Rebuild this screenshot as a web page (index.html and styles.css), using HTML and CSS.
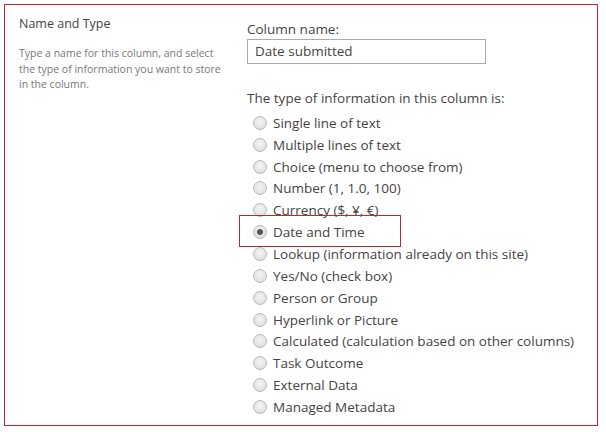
FILE: index.html
```html
<!DOCTYPE html>
<html>
<head>
<meta charset="utf-8">
<link rel="stylesheet" href="styles.css">
</head>
<body>
<div class="frame">
  <div class="left">
    <div class="sec-title">Name and Type</div>
    <div class="sec-desc">Type a name for this column, and select the type of information you want to store in the column.</div>
  </div>
  <div class="right">
    <div class="label">Column name:</div>
    <div class="input">Date submitted</div>
    <div class="label type-label">The type of information in this column is:</div>
    <ul class="radios">
      <li class="opt"><span class="radio"></span>Single line of text</li>
      <li class="opt"><span class="radio"></span>Multiple lines of text</li>
      <li class="opt"><span class="radio"></span>Choice (menu to choose from)</li>
      <li class="opt"><span class="radio"></span>Number (1, 1.0, 100)</li>
      <li class="opt"><span class="radio"></span>Currency ($, ¥, €)</li>
      <li class="opt selected"><span class="radio checked"></span>Date and Time<span class="highlight"></span></li>
      <li class="opt"><span class="radio"></span>Lookup (information already on this site)</li>
      <li class="opt"><span class="radio"></span>Yes/No (check box)</li>
      <li class="opt"><span class="radio"></span>Person or Group</li>
      <li class="opt"><span class="radio"></span>Hyperlink or Picture</li>
      <li class="opt"><span class="radio"></span>Calculated (calculation based on other columns)</li>
      <li class="opt"><span class="radio"></span>Task Outcome</li>
      <li class="opt"><span class="radio"></span>External Data</li>
      <li class="opt"><span class="radio"></span>Managed Metadata</li>
    </ul>
  </div>
</div>
</body>
</html>
```
FILE: styles.css
```css
html, body {
  margin: 0;
  padding: 0;
  background: #fff;
}
body {
  font-family: "Open Sans", "Noto Sans", sans-serif;
  color: #444;
}
.frame {
  margin: 4px 0 0 4px;
  width: 592px;
  height: 420px;
  border: 1px solid #c3262e;
  display: flex;
  box-sizing: content-box;
}
.left {
  width: 228px;
  padding: 10px 0 0 14px;
  flex: none;
}
.sec-title {
  font-size: 12.5px;
  color: #444;
  line-height: 18px;
}
.sec-desc {
  margin-top: 13px;
  width: 212px;
  font-size: 10.5px;
  line-height: 15.5px;
  color: #777;
}
.right {
  padding: 15px 0 0 0;
  flex: 1;
}
.label {
  font-size: 13.5px;
  line-height: 19px;
  color: #444;
}
.input {
  margin-top: 0;
  height: 23px;
  border: 1px solid #ababab;
  font-size: 13.5px;
  line-height: 23px;
  padding-left: 7px;
  box-sizing: content-box;
  color: #444;
  width: 230px;
}
.type-label {
  margin-top: 25px;
}
.radios {
  list-style: none;
  margin: 4px 0 0 0;
  padding: 0 0 0 6px;
}
.opt {
  position: relative;
  height: 21.85px;
  display: flex;
  align-items: center;
  font-size: 13.5px;
  color: #444;
}
.radio {
  width: 12px;
  height: 12px;
  border-radius: 50%;
  border: 1px solid #bbb;
  background: radial-gradient(circle at 50% 40%, #f4f4f4 0%, #e4e4e4 60%, #d4d4d4 100%);
  margin-right: 6px;
  flex: none;
  position: relative;
}
.radio.checked::after {
  content: "";
  position: absolute;
  left: 3px;
  top: 3px;
  width: 6px;
  height: 6px;
  border-radius: 50%;
  background: #555;
}
.highlight {
  position: absolute;
  left: -14px;
  top: -6px;
  width: 160px;
  height: 30px;
  border: 1px solid #b8282e;
  pointer-events: none;
}
```
